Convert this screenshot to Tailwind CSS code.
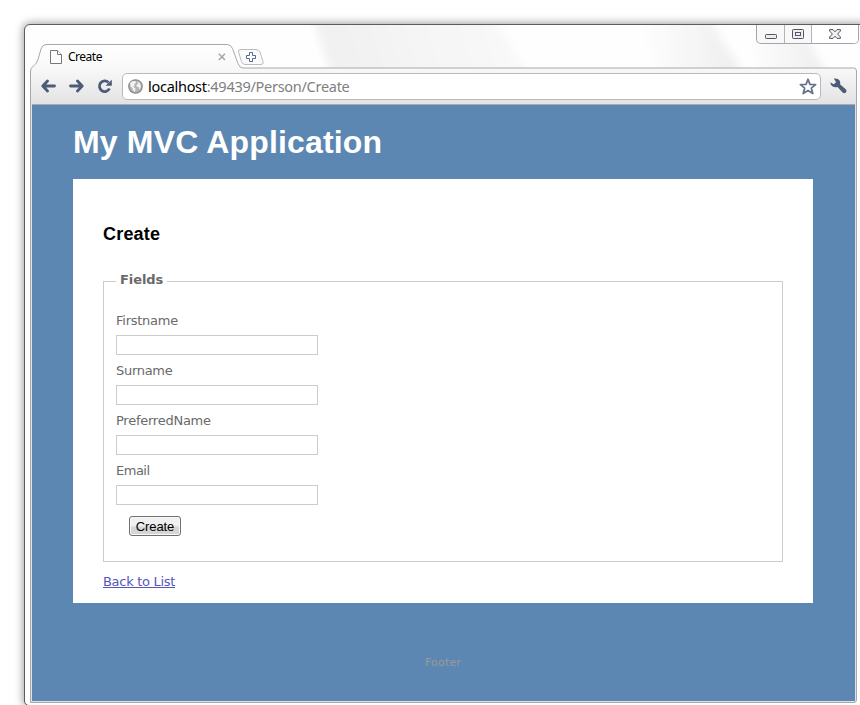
<!DOCTYPE html>
<html lang="en">
<head>
<meta charset="utf-8">
<title>Create</title>
<script src="https://cdn.jsdelivr.net/npm/@tailwindcss/browser@4"></script>
</head>
<body class="w-[860px] h-[705px] overflow-hidden bg-white">
<div class="w-[860px] h-[705px] overflow-hidden pl-6 pt-6">
<div class="relative w-[850px] h-[682px] rounded-tl-[6px] rounded-bl-[5px] border border-[#5c5c5c] bg-[#fefefe] shadow-[0_0_8px_1px_rgba(0,0,0,0.38)]">
  <!-- glass reflections and tab outline -->
  <svg class="absolute left-0 top-0" width="835" height="680" viewBox="25 25 835 680" fill="none">
    <defs>
      <linearGradient id="g1" x1="305" y1="80" x2="545" y2="0" gradientUnits="userSpaceOnUse"><stop offset="0" stop-color="#efefef"/><stop offset="1" stop-color="#fbfbfb"/></linearGradient>
      <linearGradient id="g2" x1="640" y1="0" x2="740" y2="0" gradientUnits="userSpaceOnUse"><stop offset="0" stop-color="#fefefe"/><stop offset="1" stop-color="#eeeeee"/></linearGradient>
      <linearGradient id="g3" x1="745" y1="0" x2="825" y2="0" gradientUnits="userSpaceOnUse"><stop offset="0" stop-color="#fefefe"/><stop offset="1" stop-color="#eeeeee"/></linearGradient>
      <linearGradient id="bar" x1="0" y1="45" x2="0" y2="105" gradientUnits="userSpaceOnUse"><stop offset="0" stop-color="#ffffff"/><stop offset=".4" stop-color="#f8f8f8"/><stop offset="1" stop-color="#e2e2e4"/></linearGradient>
      <filter id="soft" x="-10%" y="-20%" width="120%" height="140%"><feGaussianBlur stdDeviation="4"/></filter>
      <clipPath id="strip"><rect x="26" y="25" width="834" height="43"/></clipPath>
    </defs>
    <g clip-path="url(#strip)">
      <path d="M310 10 490 10 535 85 335 85Z" fill="url(#g1)" filter="url(#soft)"/>
      <path d="M640 10 704 10 750 85 660 85Z" fill="url(#g2)" filter="url(#soft)"/>
      <path d="M750 10 793 10 832 85 760 85Z" fill="url(#g3)" filter="url(#soft)"/>
    </g>
    <path d="M30.500 702.500V71q0-3 3-5c3-2 4-5 5.500-10l2-7q1.500-4.500 5-4.500H227q4 0 5.500 4l5.500 15q1.500 4.500 5 4.500H853.500q3 0 3 3V700q0 2.500-2.500 2.500Z" fill="url(#bar)" stroke="#a8a8aa"/>
  </svg>
  <div class="relative flex flex-col">
    <header class="flex h-[43px] items-start">
      <div class="mt-[20px] ml-[24px] flex h-[24px] w-[180px] items-center">
        <svg width="14" height="14" viewBox="0 0 14 14" fill="#fbfbfb" stroke="#777" stroke-width="1"><path d="M1.500 .5H8.500L12.500 4.500V13.500H1.500Z"/><path d="M8.500 .5V4.500H12.500" fill="#fff"/></svg>
        <span class="ml-[5px] font-['Noto_Sans',sans-serif] text-[12px] leading-[14px] tracking-[-0.5px] text-black">Create</span>
        <svg class="ml-auto mr-[3px]" width="8" height="8" viewBox="0 0 8 8" stroke="#a4a4a4" stroke-width="1.400"><path d="M.8 .8 7 7M7 .8 .8 7"/></svg>
      </div>
      <svg class="mt-[23px] ml-[8px]" width="28" height="18" viewBox="0 0 28 18" fill="#fafafa"><path d="M4 1.500H19q3 0 4 2.500l3 9.500q1 3-2 3H8q-2.500 0-3.500-3L1.500 4q-.7-2.500 2.500-2.500Z" stroke="#bcbcbc"/><path d="M12.500 4.500h3v3h3v3h-3v3h-3v-3h-3v-3h3Z" stroke="#56688a" fill="#fff"/></svg>
      <div class="ml-auto mr-[14px] flex h-[19px] w-[103px] rounded-b-[5px] border border-t-0 border-[#a5a5a7] bg-[#f8f8f8]">
        <div class="flex w-[28px] items-center justify-center border-r border-[#b5b5b7]"><svg class="mt-[5px]" width="12" height="5"><rect x=".5" y=".5" width="11" height="4" rx=".8" fill="#eee" stroke="#505464"/></svg></div>
        <div class="flex w-[27px] items-center justify-center border-r border-[#b5b5b7]"><svg width="12" height="10" fill="#eee" stroke="#505464"><rect x=".5" y=".5" width="11" height="9" rx=".8"/><rect x="3.500" y="3.500" width="5" height="3"/></svg></div>
        <div class="flex flex-1 items-center justify-center rounded-br-[4px] bg-white"><svg width="12" height="10" viewBox="0 0 12 10" fill="#f0f0f0" stroke="#505464"><path d="M.6.6H4L6 2.800 8 .6h3.400V2L8.600 5l2.800 3v1.400H8L6 7.200 4 9.400H.6V8L3.400 5 .6 2Z"/></svg></div>
      </div>
    </header>
    <nav class="ml-[7px] flex h-[37px] w-[823px] items-center border-b border-[#a9aab0]">
      <svg class="ml-[9px]" width="15" height="14" viewBox="0 0 15 14" fill="none" stroke="#4e5b76" stroke-width="2.800" stroke-linecap="round" stroke-linejoin="round"><path d="M6.500 2 1.800 7 6.500 12M2 7H13.500"/></svg>
      <svg class="ml-[13px]" width="15" height="14" viewBox="0 0 15 14" fill="none" stroke="#4e5b76" stroke-width="2.800" stroke-linecap="round" stroke-linejoin="round"><path d="M8.500 2 13.200 7 8.500 12M13 7H1.500"/></svg>
      <svg class="ml-[13px]" width="16" height="15" viewBox="0 0 16 15"><path d="M11.500 3.500A5.300 5.300 0 1 0 12.500 9.500" fill="none" stroke="#4e5b76" stroke-width="2.800"/><path d="M14.800.7V6.800H8.500Z" fill="#4e5b76"/></svg>
      <div class="ml-[9px] flex h-[27px] w-[699px] items-center rounded-[5px] border border-[#b9b9c2] bg-white">
        <svg class="ml-[5px]" width="15" height="15" viewBox="0 0 15 15"><circle cx="7.500" cy="7.500" r="6.700" fill="#b4b4b4" stroke="#8a8a8a" stroke-width="1.300"/><path d="M2 4 4.500 2 7.500 2.200 8 4 6 5 6.800 7 5 7.500 7.500 9.500 7 13 5 11.500 4.500 9 2.500 7.500ZM9 2 12 4 13 7.500 11.500 10.500 10.500 8 8.500 7.500 8.800 5.500 10.500 4.500Z" fill="#f2f2f2"/></svg>
        <span class="ml-[5px] whitespace-nowrap font-['Noto_Sans',sans-serif] text-[14.5px] leading-[20px] tracking-[-0.28px] text-[#808080]"><span class="text-black">localhost</span>:49439/Person/Create</span>
        <svg class="ml-auto mr-[3px]" width="18" height="17" viewBox="0 0 18 17"><path d="M9 1.300 11 6.400 16.600 6.600 12.300 10.100 13.800 15.500 9 12.500 4.200 15.500 5.700 10.100 1.400 6.600 7 6.400Z" fill="#fff" stroke="#68758e" stroke-width="1.800" stroke-linejoin="round"/></svg>
      </div>
      <svg class="ml-[9px]" width="17" height="16" viewBox="0 0 17 16" fill="#4e5b76"><path d="M3.800.6Q7.800-.2 9.600 2.600 10.700 4.800 10 6.300L16 11.600Q17 13.200 15.800 14.500 14.500 15.800 12.900 14.800L7.500 9Q3.500 10.200 1.300 7.300.3 6 .5 4.500L3.800 6.300 6.100 4.300Z"/></svg>
    </nav>
    <main class="ml-[7px] h-[596px] w-[823px] bg-[#5c87b2] pl-[41px] font-['DejaVu_Sans',Verdana,sans-serif] text-[13px] text-[#696969]">
      <h1 class="h-[74px] whitespace-nowrap pt-[17px] font-['Liberation_Sans',Arial,sans-serif] text-[32px] font-bold leading-[40px] tracking-[0.16px] text-white">My MVC Application</h1>
      <section class="h-[424px] w-[740px] bg-white px-[30px] pt-[43px]">
        <h2 class="h-[59px] font-['Liberation_Sans',Arial,sans-serif] text-[18px] font-bold leading-[24px] tracking-[0.2px] text-black">Create</h2>
        <div class="relative h-[281px] border border-[#cccccc] px-[12px] pt-[28px]">
          <span class="absolute left-[12px] top-[-11px] bg-white px-[4px] text-[13px] font-bold leading-[18px] tracking-[-0.08px]">Fields</span>
          <div class="flex h-[50px] flex-col"><label class="h-[25px] leading-[22px] tracking-[-0.25px]" for="f1">Firstname</label><input id="f1" class="h-[20px] w-[202px] border border-[#cccccc] bg-white"></div>
          <div class="flex h-[50px] flex-col"><label class="h-[25px] leading-[22px] tracking-[-0.3px]" for="f2">Surname</label><input id="f2" class="h-[20px] w-[202px] border border-[#cccccc] bg-white"></div>
          <div class="flex h-[50px] flex-col"><label class="h-[25px] leading-[22px] tracking-[-0.25px]" for="f3">PreferredName</label><input id="f3" class="h-[20px] w-[202px] border border-[#cccccc] bg-white"></div>
          <div class="flex h-[50px] flex-col"><label class="h-[25px] leading-[22px] tracking-[-0.5px]" for="f4">Email</label><input id="f4" class="h-[20px] w-[202px] border border-[#cccccc] bg-white"></div>
          <button class="ml-[13px] mt-[6px] block h-[20px] w-[52px] rounded-[3px] border border-[#707070] bg-linear-to-b from-[#f0f0f0] from-50% to-[#d6d6d6] to-55% pt-px font-['Liberation_Sans',Arial,sans-serif] text-[13px] leading-[18px] tracking-[-0.1px] text-black shadow-[inset_0_0_0_1px_#f8f8f8]">Create</button>
        </div>
        <a class="mt-[9px] inline-block leading-[22px] tracking-[-0.3px] text-[#5555bb] underline" href="#">Back to List</a>
      </section>
      <footer class="w-[740px] pt-[50px] text-center text-[11px] leading-[20px] tracking-[0.2px] text-[#999999]">Footer</footer>
    </main>
  </div>
</div>
</div>
</body>
</html>
